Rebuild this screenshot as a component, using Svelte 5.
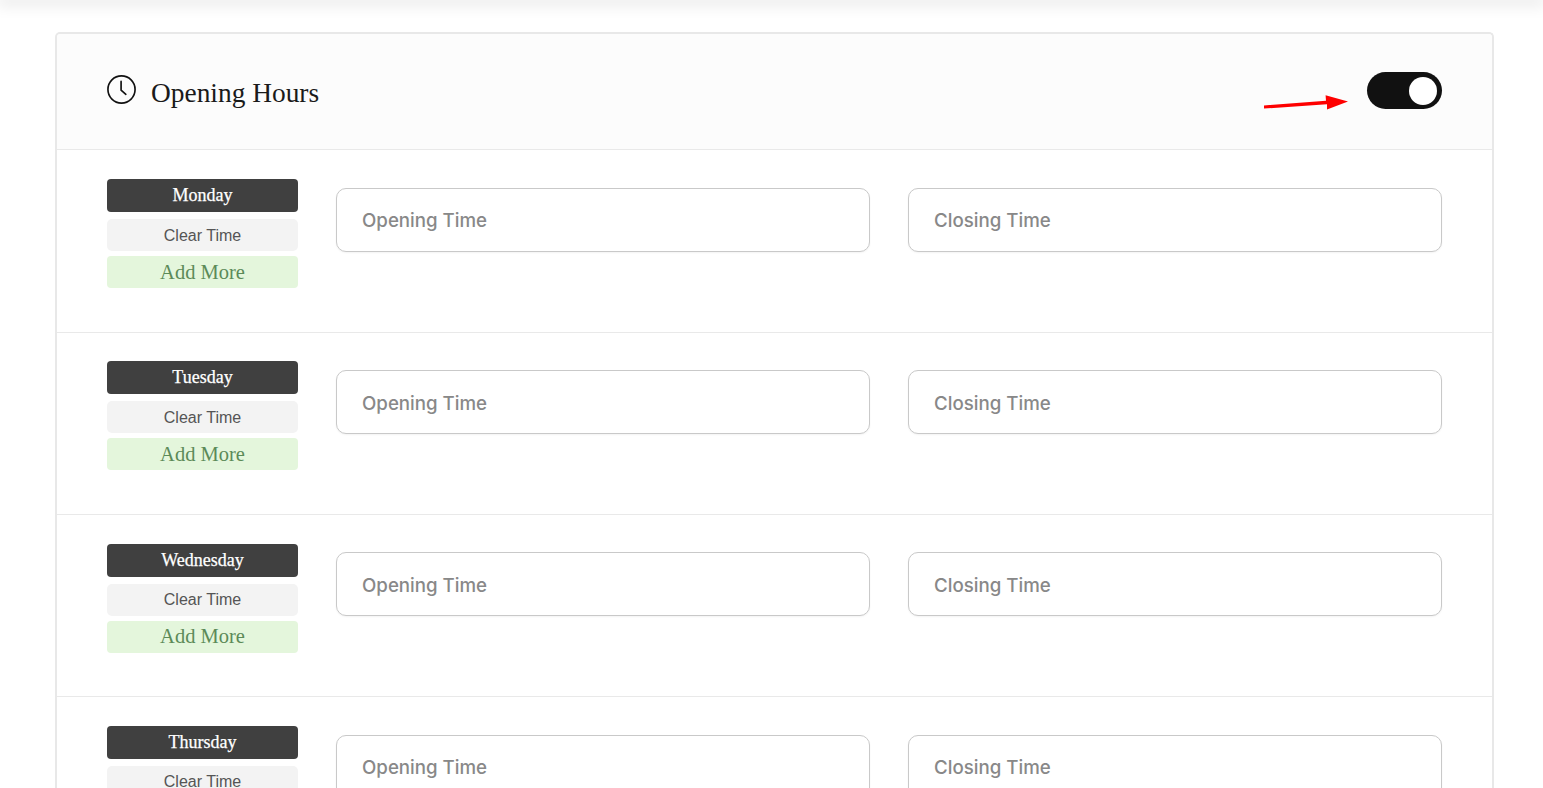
<script>
  const days = ['Monday', 'Tuesday', 'Wednesday', 'Thursday'];
  let open = $state(true);
</script>

<div class="page">
  <div class="topbar"></div>
  <section class="card">
    <header class="cardHead">
      <h2 class="title">
        <svg class="clock" viewBox="0 0 28 28" width="29" height="29" fill="none" stroke="#111" stroke-width="1.6" stroke-linecap="round">
          <circle cx="14" cy="14" r="13.1" />
          <path d="M13.6 6.2V14.6L18.2 18.6" />
        </svg>
        <span>Opening Hours</span>
      </h2>
      <button class="toggle" class:on={open} type="button" aria-label="Toggle opening hours" onclick={() => (open = !open)}>
        <span class="knob"></span>
      </button>
      <svg class="arrow" viewBox="0 0 90 20" width="90" height="20">
        <path d="M1 14.6 L64 10.2 L64 15.6 L85 7.6 L62.6 1.2 L63 6.8 L1 11.4 Z" fill="#fe0000" />
      </svg>
    </header>

    {#each days as day}
      <div class="row">
        <div class="dayCol">
          <div class="day">{day}</div>
          <button class="clear" type="button">Clear Time</button>
          <button class="add" type="button">Add More</button>
        </div>
        <input class="time" type="text" placeholder="Opening Time" />
        <input class="time" type="text" placeholder="Closing Time" />
      </div>
    {/each}
  </section>
</div>

<style>
  :global(body) {
    margin: 0;
    background: #fff;
    overflow: hidden;
  }

  .page {
    height: 788px;
    overflow: hidden;
    padding: 0 50px 0 56px;
    box-sizing: border-box;
  }

  .topbar {
    height: 0;
    margin: 0 -50px 0 -56px;
    box-shadow: 0 0 16px 3px rgba(0, 0, 0, 0.17);
  }

  .card {
    margin: 32px -1px 0 -1px;
    border: 2px solid #e8e8e8;
    border-bottom: 0;
    border-radius: 5px 5px 0 0;
  }

  .cardHead {
    position: relative;
    display: flex;
    align-items: center;
    justify-content: space-between;
    height: 115.25px;
    padding: 0 50px;
    background: #fcfcfc;
    border-bottom: 1px solid #e9e9e9;
    border-radius: 4px 4px 0 0;
  }

  .title {
    display: flex;
    align-items: center;
    gap: 15px;
    margin: 0;
    font-family: "Liberation Serif", serif;
    font-size: 27.4px;
    font-weight: 400;
    color: #1a1a1a;
  }

  .title span {
    position: relative;
    top: 2px;
  }

  .clock {
    display: block;
    position: relative;
    top: -2px;
  }

  .toggle {
    position: relative;
    top: -1px;
    display: flex;
    justify-content: flex-start;
    align-items: center;
    width: 75px;
    height: 37px;
    padding: 0 5px;
    border: 0;
    border-radius: 19px;
    background: #bbb;
    cursor: pointer;
  }

  .toggle.on {
    background: #111;
    justify-content: flex-end;
  }

  .knob {
    width: 28px;
    height: 28px;
    border-radius: 50%;
    background: #fff;
  }

  .arrow {
    position: absolute;
    left: 1206px;
    top: 60px;
  }

  .row {
    display: flex;
    align-items: flex-start;
    gap: 38px;
    height: 152.55px;
    padding: 28.75px 50px 0;
    border-bottom: 1px solid #e9e9e9;
  }

  .dayCol {
    display: flex;
    flex-direction: column;
    flex: 0 0 191px;
    width: 191px;
  }

  .day,
  .clear,
  .add {
    display: flex;
    align-items: center;
    justify-content: center;
    border: 0;
    padding: 0;
    width: 100%;
    box-sizing: border-box;
  }

  .day {
    height: 33px;
    border-radius: 4px;
    background: #404040;
    color: #fff;
    font-family: "Liberation Serif", serif;
    font-size: 18px;
    font-weight: 400;
    -webkit-text-stroke: 0.25px #fff;
  }

  .clear {
    height: 32px;
    margin-top: 7px;
    padding-top: 1px;
    border-radius: 5px;
    background: #f3f3f3;
    color: #555;
    font-family: "Liberation Sans", sans-serif;
    font-size: 16px;
  }

  .add {
    height: 32px;
    margin-top: 5px;
    border-radius: 4px;
    background: #e4f6dc;
    color: #5c8a58;
    font-family: "Liberation Serif", serif;
    font-size: 20.5px;
    cursor: pointer;
  }

  .time {
    flex: 1 1 0;
    min-width: 0;
    height: 64px;
    margin-top: 8.8px;
    padding: 2px 25px 0;
    box-sizing: border-box;
    border: 1px solid #c9c9c9;
    border-radius: 10px;
    background: #fff;
    box-shadow: 0 1px 2px rgba(0, 0, 0, 0.05);
    font-family: Inter, sans-serif;
    font-size: 18.7px;
    font-weight: 500;
    outline: none;
  }

  .time::placeholder {
    color: #888;
    opacity: 1;
  }
</style>
